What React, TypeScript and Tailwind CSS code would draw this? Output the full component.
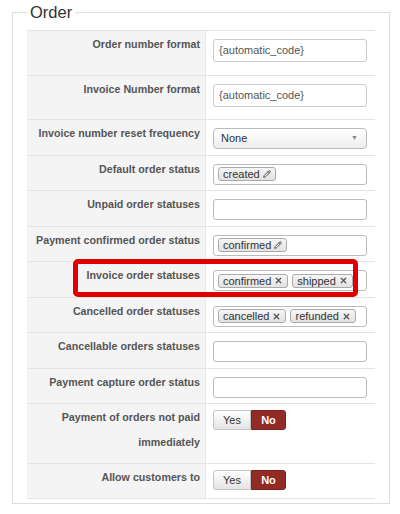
import { Pencil, X } from "lucide-react"

type Field =
  | { kind: "text"; value: string }
  | { kind: "select"; value: string }
  | { kind: "tags"; tags: string[]; edit?: boolean }
  | { kind: "toggle" }

type Row = { label: string; field: Field; tall?: boolean; highlight?: boolean }

const rows: Row[] = [
  { label: "Order number format", field: { kind: "text", value: "{automatic_code}" }, tall: true },
  { label: "Invoice Number format", field: { kind: "text", value: "{automatic_code}" }, tall: true },
  { label: "Invoice number reset frequency", field: { kind: "select", value: "None" } },
  { label: "Default order status", field: { kind: "tags", tags: ["created"], edit: true } },
  { label: "Unpaid order statuses", field: { kind: "tags", tags: [] } },
  { label: "Payment confirmed order status", field: { kind: "tags", tags: ["confirmed"], edit: true } },
  { label: "Invoice order statuses", field: { kind: "tags", tags: ["confirmed", "shipped"] }, highlight: true },
  { label: "Cancelled order statuses", field: { kind: "tags", tags: ["cancelled", "refunded"] } },
  { label: "Cancellable orders statuses", field: { kind: "tags", tags: [] } },
  { label: "Payment capture order status", field: { kind: "tags", tags: [] } },
  { label: "Payment of orders not paid immediately", field: { kind: "toggle" } },
  { label: "Allow customers to", field: { kind: "toggle" } },
]

function Chip({ text, edit }: { text: string; edit?: boolean }) {
  return (
    <span className="flex items-center h-[14px] px-[4px] gap-[3px] rounded-[3px] border border-[#aaaaaa] bg-gradient-to-b from-[#f6f6f6] to-[#e2e2e2] text-[11px] leading-[12px] text-[#333]">
      {text}
      {edit ? (
        <Pencil className="w-[8px] h-[8px] text-[#555]" strokeWidth={3} />
      ) : (
        <X className="w-[9px] h-[9px] text-[#555]" strokeWidth={3.5} />
      )}
    </span>
  )
}

function FieldInput({ field }: { field: Field }) {
  if (field.kind === "text") {
    return (
      <div className="w-[154px] h-[23px] border border-[#cccccc] rounded-[3px] px-[5px] flex items-center text-[11px] text-[#555]">
        {field.value}
      </div>
    )
  }
  if (field.kind === "select") {
    return (
      <div className="w-[154px] h-[21px] border border-[#bbbbbb] rounded-[4px] pl-[7px] pr-[8px] flex items-center justify-between text-[11px] text-[#333] bg-gradient-to-b from-white to-[#eeeeee]">
        <span>{field.value}</span>
        <span className="text-[7px] text-[#888]">▼</span>
      </div>
    )
  }
  if (field.kind === "tags") {
    return (
      <div className="w-[154px] h-[21px] border border-[#bbbbbb] rounded-[3px] px-[4px] flex items-center gap-[4px]">
        {field.tags.map((t) => (
          <Chip key={t} text={t} edit={field.edit} />
        ))}
      </div>
    )
  }
  return (
    <div className="flex h-[20px] text-[11px]">
      <span className="w-[38px] flex items-center justify-center border border-[#c4c4c4] rounded-l-[3px] bg-gradient-to-b from-white to-[#e4e4e4] text-[#333]">
        Yes
      </span>
      <span className="w-[35px] flex items-center justify-center rounded-r-[3px] bg-[#922b25] border border-[#7d221d] text-white font-bold">
        No
      </span>
    </div>
  )
}

export default function App() {
  return (
    <div className="bg-white w-[400px] h-[514px] pt-[2px] pl-[12px] font-['Liberation_Sans',Arial,sans-serif]">
      <fieldset className="w-[378px] border border-[#dddddd] pl-[14px] pr-[14px] pb-[4px]">
        <legend className="px-[3px] text-[16.5px] leading-[20px] text-[#333]">Order</legend>
        <div className="mt-[8px] border-t border-[#e4e4e4]">
          {rows.map((row) => (
            <div key={row.label} className="relative flex border-b border-[#e4e4e4]">
              <div className="w-[179px] bg-[#f4f4f4] border-r border-[#e8e8e8] pl-[4px] pr-[5px] pt-[1px] pb-[8px] text-right text-[10.7px] leading-[25px] font-bold text-[#555]">
                {row.label}
              </div>
              <div
                className={`flex-1 pl-[7px] ${
                  row.tall
                    ? "pt-[8px] pb-[12.5px]"
                    : row.field.kind === "toggle"
                    ? "pt-[6px] pb-[8px]"
                    : "pt-[8px] pb-[5.5px]"
                }`}
              >
                <FieldInput field={row.field} />
              </div>
              {row.highlight && (
                <div className="absolute left-[46px] top-[-3px] w-[285px] h-[38px] border-[5px] border-[#e00000] rounded-[5px]" />
              )}
            </div>
          ))}
        </div>
      </fieldset>
    </div>
  )
}
